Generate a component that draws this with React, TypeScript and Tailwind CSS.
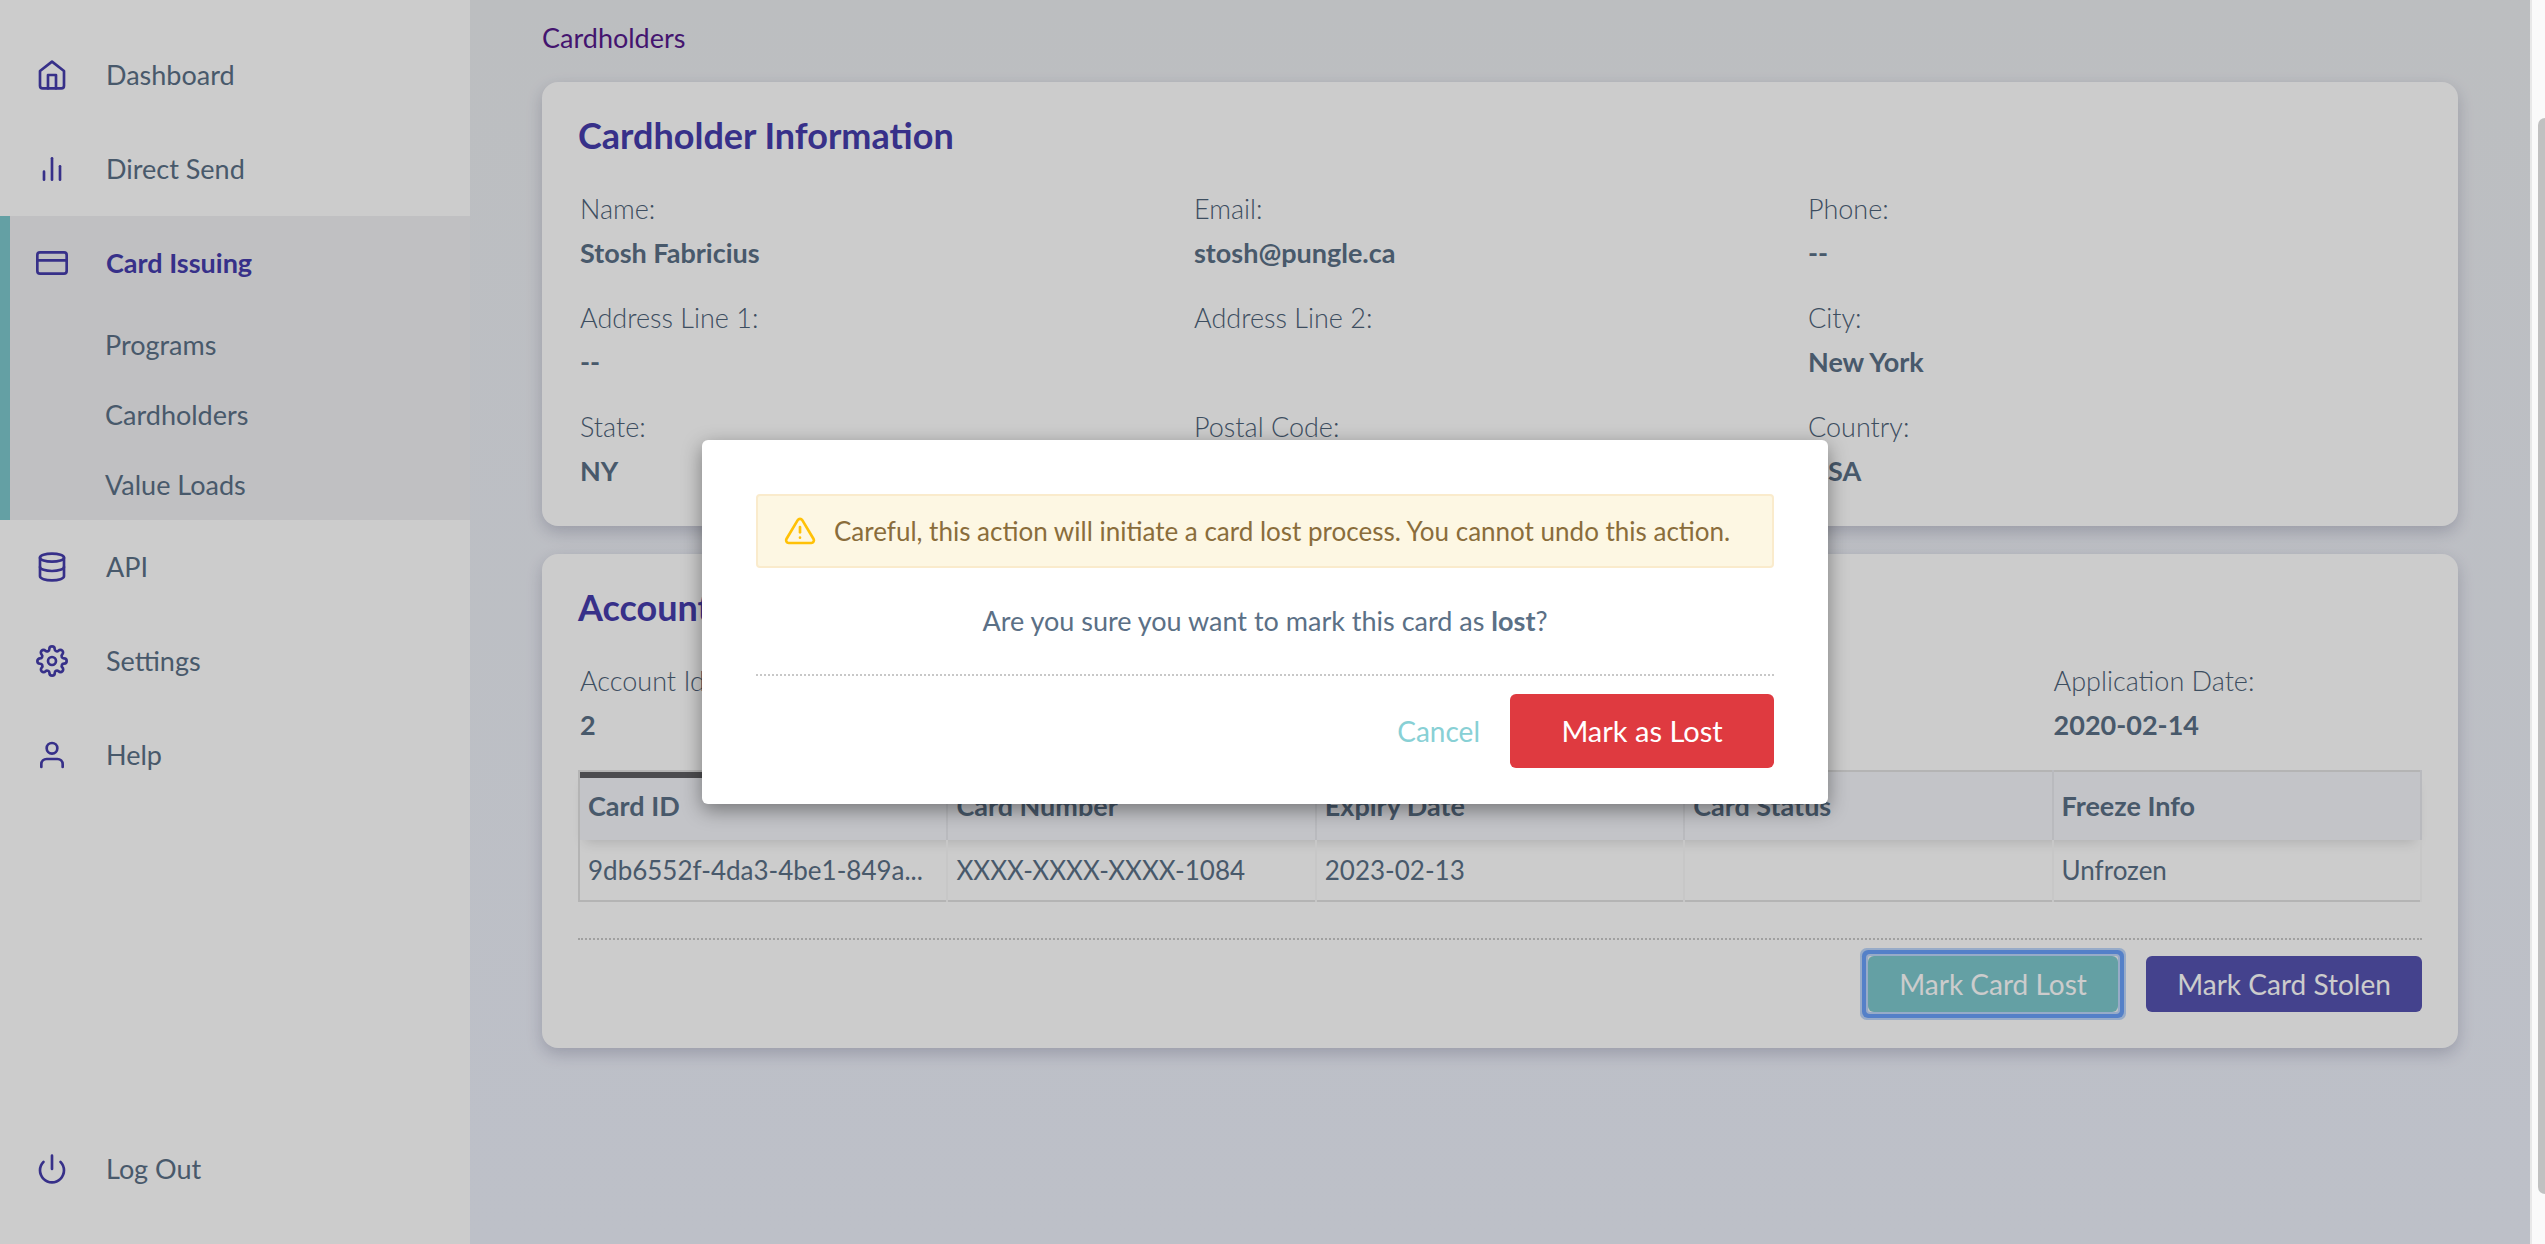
import React from 'react';
import {
  FiAlertTriangle,
  FiBarChart2,
  FiCreditCard,
  FiDatabase,
  FiHome,
  FiPower,
  FiSettings,
  FiUser,
} from 'react-icons/fi';
import type { IconType } from 'react-icons';

type FieldData = { label: string; value: string };

const CARDHOLDER: FieldData[] = [
  { label: 'Name:', value: 'Stosh Fabricius' },
  { label: 'Email:', value: 'stosh@pungle.ca' },
  { label: 'Phone:', value: '--' },
  { label: 'Address Line 1:', value: '--' },
  { label: 'Address Line 2:', value: '' },
  { label: 'City:', value: 'New York' },
  { label: 'State:', value: 'NY' },
  { label: 'Postal Code:', value: '' },
  { label: 'Country:', value: 'USA' },
];

const COLUMNS = ['Card ID', 'Card Number', 'Expiry Date', 'Card Status', 'Freeze Info'];
const ROWS = [
  ['9db6552f-4da3-4be1-849a...', 'XXXX-XXXX-XXXX-1084', '2023-02-13', '', 'Unfrozen'],
];

const NavItem: React.FC<{ icon: IconType; label: string; active?: boolean }> = ({ icon: Icon, label, active }) => (
  <a
    href="#"
    className={`flex h-[94px] items-center gap-[38px] ${active ? 'pl-[26px] font-bold text-[#453dac]' : 'pl-9'}`}
  >
    <Icon size={32} className="shrink-0 text-[#453dac]" />
    <span>{label}</span>
  </a>
);

const Sidebar = () => (
  <nav className="flex w-[470px] shrink-0 flex-col bg-white py-7">
    <NavItem icon={FiHome} label="Dashboard" />
    <NavItem icon={FiBarChart2} label="Direct Send" />
    <div className="border-l-[10px] border-[#7dc8ce] bg-[#f0f0f3]">
      <NavItem icon={FiCreditCard} label="Card Issuing" active />
      {['Programs', 'Cardholders', 'Value Loads'].map(label => (
        <a key={label} href="#" className="flex h-[70px] items-center pl-[95px]">
          {label}
        </a>
      ))}
    </div>
    <NavItem icon={FiDatabase} label="API" />
    <NavItem icon={FiSettings} label="Settings" />
    <NavItem icon={FiUser} label="Help" />
    <div className="mt-auto">
      <NavItem icon={FiPower} label="Log Out" />
    </div>
  </nav>
);

const Field: React.FC<FieldData> = ({ label, value }) => (
  <div className="h-[109px] leading-[44px]">
    <dt className="font-light text-[#4d6278]">{label}</dt>
    <dd className="font-bold">{value}</dd>
  </div>
);

const Card: React.FC<{ title: string; children: React.ReactNode }> = ({ title, children }) => (
  <section className="rounded-2xl bg-white px-9 pt-8 shadow-[0_6px_16px_rgba(40,40,80,0.22)]">
    <h2 className="text-4xl leading-[42px] font-bold text-[#453dac]">{title}</h2>
    {children}
  </section>
);

const CardTable = () => (
  <table className="w-full table-fixed border-collapse border-2 border-[#e2e2e2] text-left">
    <thead className="bg-[#f4f5fa] shadow-[0_8px_12px_-6px_rgba(0,0,0,0.15)]">
      <tr className="h-[69px]">
        {COLUMNS.map((col, i) => (
          <th
            key={col}
            className={`border-r-2 border-[#e8e9ee] px-2 font-bold ${i === 0 ? 'shadow-[inset_0_6px_0_#5f5f63]' : ''}`}
          >
            {col}
          </th>
        ))}
      </tr>
    </thead>
    <tbody>
      {ROWS.map(row => (
        <tr key={row[0]} className="h-[61px] text-[26px]">
          {row.map((cell, i) => (
            <td key={i} className="truncate border-r-2 border-[#f9f9f9] px-2">
              {cell}
            </td>
          ))}
        </tr>
      ))}
    </tbody>
  </table>
);

const ConfirmModal = () => (
  <div className="absolute inset-0 flex items-center justify-center bg-black/20">
    <div
      role="dialog"
      aria-modal="true"
      className="w-[1126px] rounded-md bg-white px-[54px] pt-[54px] pb-9 shadow-[0_6px_20px_rgba(0,0,0,0.4)]"
    >
      <div
        role="alert"
        className="flex h-[74px] items-center gap-[18px] rounded-sm border-2 border-[#faebcc] bg-[#fdf7e3] pl-[26px] text-[26px] whitespace-nowrap text-[#8a6d3b]"
      >
        <FiAlertTriangle size={32} className="shrink-0 text-[#ffc107]" />
        <span>Careful, this action will initiate a card lost process. You cannot undo this action.</span>
      </div>
      <p className="py-9 text-center leading-[34px]">
        Are you sure you want to mark this card as <strong>lost</strong>?
      </p>
      <div className="flex items-center justify-end gap-[30px] border-t-2 border-dotted border-[#c8c8c8] pt-[18px]">
        <button className="text-[28px] text-[#88d0d5]">Cancel</button>
        <button className="h-[74px] w-[264px] rounded-md bg-[#df3a40] text-[29px] text-white">Mark as Lost</button>
      </div>
    </div>
  </div>
);

export default function App() {
  return (
    <div className="flex h-screen overflow-hidden font-['Lato',sans-serif] text-[27px] text-[#5b7086]">
      <div className="relative flex min-w-0 flex-1">
        <Sidebar />
        <main className="min-w-0 flex-1 bg-linear-to-b from-[#eceef1] to-[#edf0fb] px-[72px] pt-[18px]">
          <a href="#" className="block leading-10 text-[#551a8b]">
            Cardholders
          </a>
          <div className="mt-6 flex flex-col gap-7">
            <Card title="Cardholder Information">
              <dl className="mt-[31px] grid grid-cols-3 pb-3 pl-0.5">
                {CARDHOLDER.map(field => (
                  <Field key={field.label} {...field} />
                ))}
              </dl>
            </Card>

            <Card title="Account Information">
              <dl className="mt-[31px] grid h-[111px] grid-cols-5 pl-0.5">
                <Field label="Account Id:" value="2" />
                <div className="col-start-5">
                  <Field label="Application Date:" value="2020-02-14" />
                </div>
              </dl>
              <CardTable />
              <div className="mt-9 flex justify-end gap-7 border-t-2 border-dotted border-[#c8c8c8] pt-4 pb-9">
                {/* Focused button */}
                <div className="rounded-xs bg-[#f2f4f8] shadow-[0_0_0_2px_#bdd6fb,0_0_0_6px_#69a0fa,0_0_0_8px_#bdd6fb]">
                  <button className="h-14 w-[250px] rounded-md bg-[#7dc8ce] text-[28px] text-white">
                    Mark Card Lost
                  </button>
                </div>
                <button className="h-14 w-[276px] rounded-md bg-[#5653b1] text-[28px] text-white">
                  Mark Card Stolen
                </button>
              </div>
            </Card>
          </div>
        </main>
        <ConfirmModal />
      </div>

      {/* Scroll track */}
      <div className="w-[15px] shrink-0 border-l-2 border-[#e8e8e8] bg-[#fafafa] pt-[118px] pb-[50px] pl-[6px]">
        <div className="h-full rounded-l-lg bg-[#c1c1c1]" />
      </div>
    </div>
  );
}
